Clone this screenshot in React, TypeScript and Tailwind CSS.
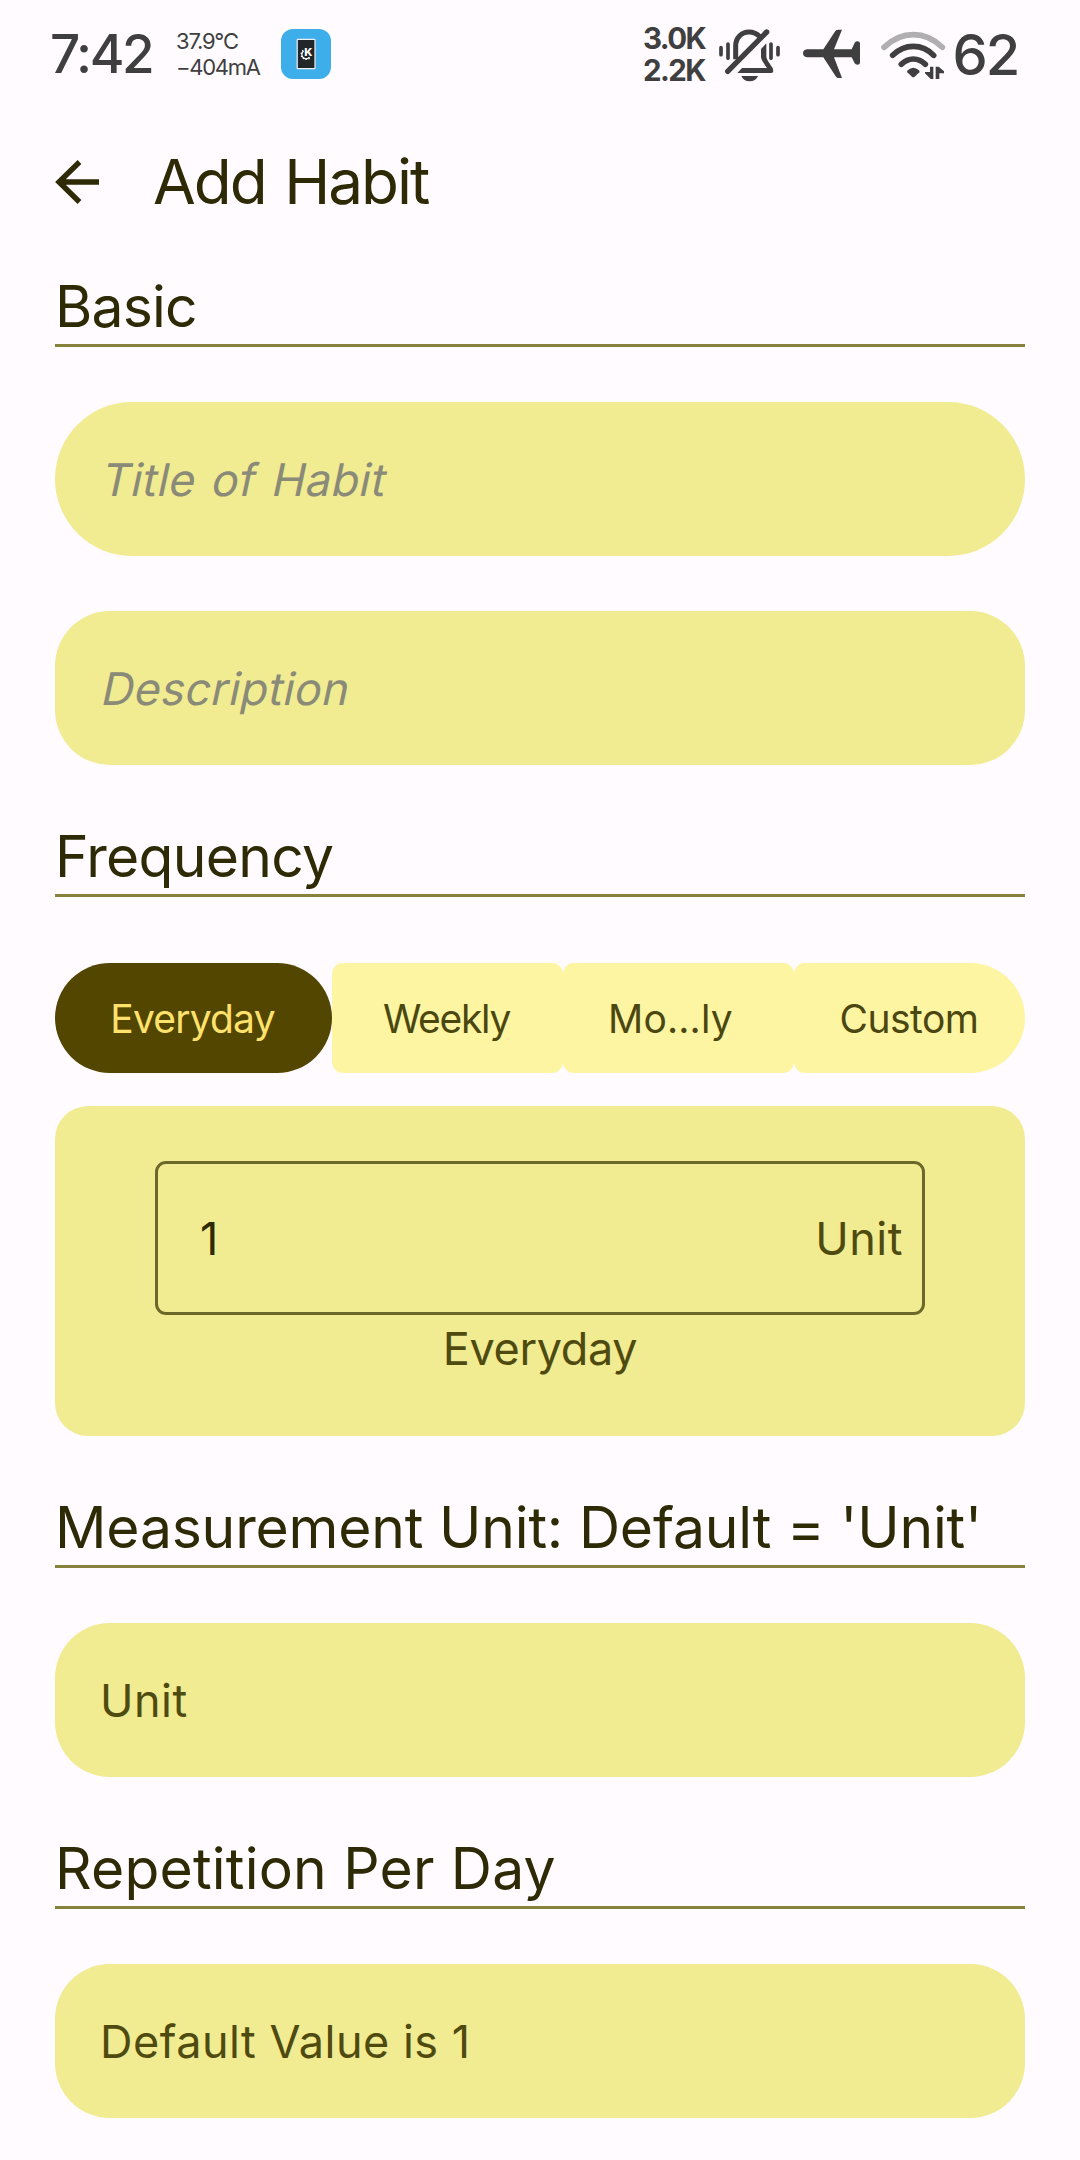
import type { ReactNode } from "react";

function BellOffIcon() {
  return (
    <svg className="h-[60px] w-[63px] shrink-0" viewBox="264 42 189 180" fill="none" stroke="#3f3f3f" strokeLinecap="round">
      <path d="M273 113V134M294 102V145M423 102V145M444 113V134" strokeWidth="11" />
      <path d="M317 148V108C317 84 334 66 357 66C370 66 381 71 389 80" strokeWidth="15" strokeLinecap="butt" />
      <path d="M293 184L410 66" strokeWidth="16" />
      <path d="M393 117L409 100V140C410 149 416 155 428 174Q433 189 424 189H322L336 174H411C400 158 394 150 393 141Z" fill="#3f3f3f" stroke="none" />
      <path d="M334 198H384C380 208 371 214 359 214C347 214 338 208 334 198Z" fill="#3f3f3f" stroke="none" />
    </svg>
  );
}

function PlaneIcon() {
  return (
    <svg className="h-[60px] w-[59px] shrink-0" viewBox="516 42 177 180" fill="#3f3f3f">
      <path d="M531 118H580L616 63Q619 59 625 59H636L612 118H665L674 98Q677 94 682 94Q690 94 690 100V158Q690 164 682 164Q677 164 674 160L665 142H612L636 204H626Q621 204 618 200L580 142H531Q519 140 519 130Q519 120 531 118Z" />
    </svg>
  );
}

function WifiIcon() {
  return (
    <svg className="h-[60px] w-[66px] shrink-0" viewBox="750 42 198 180" fill="none" strokeLinecap="round">
      <path d="M762 112C788 87 816 74 850 74C884 74 912 87 937 112" stroke="#b1aeb1" strokeWidth="17" />
      <path d="M788 136C805 119 825 109 850 109C875 109 895 119 911 136" stroke="#3f3f3f" strokeWidth="17" />
      <path d="M814 163C824 153 836 147 850 147C864 147 876 153 886 163" stroke="#3f3f3f" strokeWidth="17" />
      <path d="M832 187Q830 184 833 181Q850 166 867 181Q870 184 868 187L854 200Q850 203 846 200Z" fill="#3f3f3f" />
      <path d="M900 170H910V207H902L885 190V186H900ZM917 170H926L942 184V190H928V207H917Z" fill="#3f3f3f" />
    </svg>
  );
}

function ConnectIcon() {
  return (
    <svg className="h-[50px] w-[50px] shrink-0" viewBox="0 0 50 50">
      <rect width="50" height="50" rx="12" fill="#3daee9" />
      <rect x="16.2" y="10.4" width="17.8" height="29.2" rx="0.6" fill="#232629" stroke="#eff0f1" strokeWidth="1.2" />
      <path d="M22.6 22A4.3 4.3 0 1 0 28.6 28" fill="none" stroke="#fff" strokeWidth="1.2" />
      <path d="M22.2 21.4A5 5 0 1 0 29.4 28.2" fill="none" stroke="#fff" strokeWidth="1.6" strokeDasharray="1.2 1.6" />
      <text x="23.2" y="27.4" fontFamily="Inter, sans-serif" fontSize="11" fontWeight="800" fill="#fff">K</text>
    </svg>
  );
}

function BackIcon() {
  return (
    <svg className="h-[44px] w-[44px] shrink-0" viewBox="0 0 44 44" fill="none" stroke="#2e2a06" strokeWidth="5.4">
      <path d="M44 22H5M24.5 2L4 22L24.5 42" />
    </svg>
  );
}

function Heading({ children, className }: { children: ReactNode; className: string }) {
  return (
    <h2 className={`border-b-[3px] border-[#87833f] pt-[18px] pb-[2px] text-[57px] leading-[70px] whitespace-nowrap text-[#2e2a06] ${className}`}>
      {children}
    </h2>
  );
}

function Field({ children, className }: { children: ReactNode; className: string }) {
  return <div className={`flex h-[154px] items-center bg-[#f1eb91] pt-[2px] text-[45px] ${className}`}>{children}</div>;
}

function Tab({ children, className }: { children: ReactNode; className: string }) {
  return <button className={`h-[110px] pt-[2px] text-[39px] whitespace-nowrap ${className}`}>{children}</button>;
}

export default function App() {
  return (
    <div className="h-[2160px] w-[1080px] overflow-hidden bg-[#fffbff] font-['Inter','Noto_Sans',sans-serif]">
      <header className="flex h-[110px] items-center pr-[62px] pb-[2px] pl-[50px] text-[#3f3f3f]">
        <div className="w-[102px] text-[53px] leading-none font-medium tracking-[-2.45px]">7:42</div>
        <div className="ml-[24px] text-[22px] leading-[26.5px] whitespace-nowrap">
          <div className="tracking-[-1.2px]">37.9°C</div>
          <div className="tracking-[-1.3px]">−404mA</div>
        </div>
        <div className="ml-auto flex w-[737px] items-center">
          <ConnectIcon />
          <div className="ml-[312px] w-[66px] pt-px text-[29.5px] leading-[31.7px] font-bold tracking-[-1.6px]">
            <div>3.0K</div>
            <div>2.2K</div>
          </div>
          <div className="ml-[9px] flex items-center">
            <BellOffIcon />
            <div className="ml-[21px] flex">
              <PlaneIcon />
            </div>
            <div className="ml-[19px] flex">
              <WifiIcon />
            </div>
          </div>
          <div className="ml-[7px] pt-[2px] text-[56px] leading-none font-medium tracking-[-2.2px]">62</div>
        </div>
      </header>

      <div className="flex h-[144px] items-center pl-[55px]">
        <BackIcon />
        <h1 className="ml-[54px] text-[62px] leading-none tracking-[-2px] [word-spacing:3px] text-[#2e2a06]">Add Habit</h1>
      </div>

      <main className="px-[55px]">
        <Heading className="tracking-[-0.8px]">Basic</Heading>
        <Field className="mt-[55px] rounded-full pl-[48px] tracking-[0.4px] text-[#8a8a78]">
          <span className="inline-block -skew-x-12 [word-spacing:3px]">Title of Habit</span>
        </Field>
        <Field className="mt-[55px] rounded-[55px] pl-[48px] tracking-[0.35px] text-[#8a8a78]">
          <span className="inline-block -skew-x-12">Description</span>
        </Field>

        <Heading className="mt-[39px] tracking-[-0.7px]">Frequency</Heading>
        <div className="mt-[66px] grid grid-cols-[277px_231px_231px_231px]">
          <Tab className="rounded-full bg-[#534600] pr-[2px] tracking-[-0.8px] text-[#ffe26d]">Everyday</Tab>
          <Tab className="rounded-[11px] bg-[#fef5a3] pr-[2px] tracking-[-1.3px] text-[#4a4710]">Weekly</Tab>
          <Tab className="rounded-[11px] bg-[#fef5a3] pr-[16px] tracking-[0.2px] text-[#4a4710]">Mo…ly</Tab>
          <Tab className="rounded-l-[11px] rounded-r-[55px] bg-[#fef5a3] pr-px tracking-[-0.5px] text-[#4a4710]">Custom</Tab>
        </div>

        <section className="mt-[33px] h-[330px] rounded-[33px] bg-[#f1eb91] px-[100px] pt-[55px]">
          <div className="flex h-[154px] items-center justify-between rounded-[11px] border-[3px] border-[#6c6829] pt-[2px] pr-[19px] pl-[42px] text-[45px]">
            <span className="text-[#2e2a06]">1</span>
            <span className="tracking-[0.5px] text-[#4f4b10]">Unit</span>
          </div>
          <div className="pt-px text-center text-[45px] leading-[66px] tracking-[-0.34px] text-[#4f4b10]">Everyday</div>
        </section>

        <Heading className="mt-[39px] tracking-[-0.19px]">Measurement Unit: Default = 'Unit'</Heading>
        <Field className="mt-[55px] rounded-[55px] pl-[45px] tracking-[0.5px] text-[#4f4b10]">Unit</Field>

        <Heading className="mt-[39px] tracking-[0.2px]">Repetition Per Day</Heading>
        <Field className="mt-[55px] rounded-[55px] pl-[45px] tracking-[0.5px] text-[#4f4b10]">Default Value is 1</Field>
      </main>
    </div>
  );
}
